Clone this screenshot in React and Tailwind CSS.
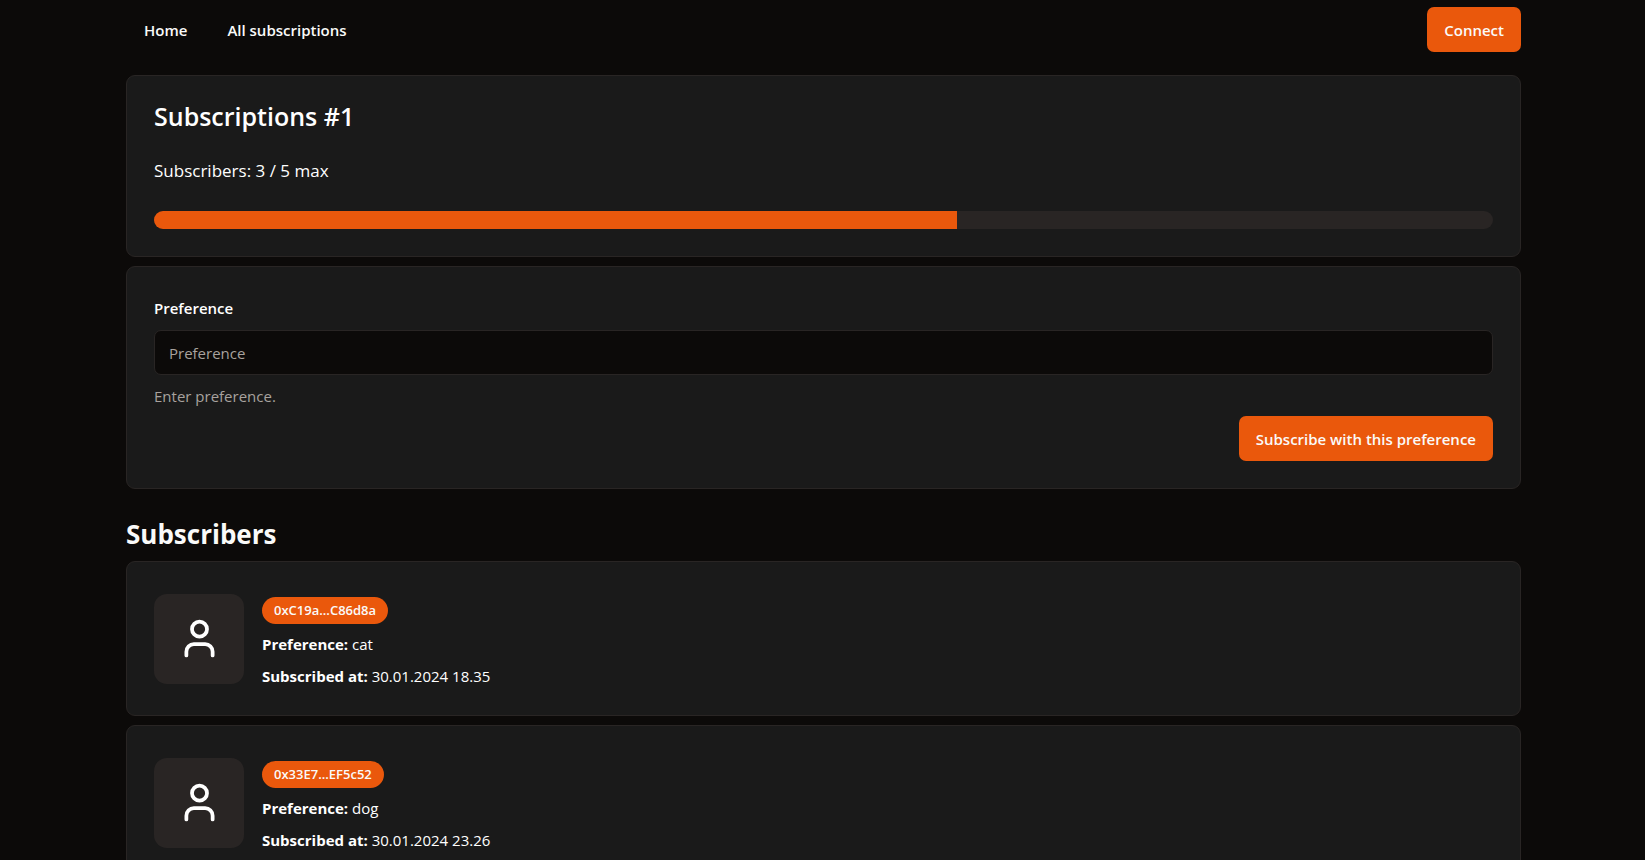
import { User } from "lucide-react";

const subscribers = [
  { address: "0xC19a...C86d8a", preference: "cat", date: "30.01.2024 18.35" },
  { address: "0x33E7...EF5c52", preference: "dog", date: "30.01.2024 23.26" },
];

const current = 3;
const max = 5;

function Card({ as: Tag = "section", className = "", children }) {
  return (
    <Tag className={`rounded-[9px] border border-[#292524] bg-[#1a1a1a] p-[27px] text-white ${className}`}>
      {children}
    </Tag>
  );
}

function Button({ children, type = "button" }) {
  return (
    <button
      type={type}
      className="h-[45px] cursor-pointer whitespace-nowrap rounded-[7px] bg-[#ea580c] px-[17px] pt-px text-[15px] font-semibold text-[#fafaf9] hover:bg-[#d9520b]"
    >
      {children}
    </button>
  );
}

function Subscriber({ address, preference, date }) {
  return (
    <Card as="li" className="flex items-center gap-[18px]">
      <div className="flex size-[90px] shrink-0 items-center justify-center rounded-[13px] bg-[#292524]">
        <User size={45} aria-hidden="true" />
      </div>
      <div className="flex flex-col items-start gap-[9px] pt-2 text-[15px] leading-[23px]">
        <span className="rounded-full bg-[#ea580c] px-3 text-[13px] leading-[27px] font-semibold text-[#fafaf9]">
          {address}
        </span>
        <p>
          <b className="font-bold">Preference:</b> {preference}
        </p>
        <p>
          <b className="font-bold">Subscribed at:</b> {date}
        </p>
      </div>
    </Card>
  );
}

export default function App() {
  return (
    <div className="h-screen overflow-hidden bg-[#0c0a09] pr-[124px] pl-[126px] font-['Open_Sans','Noto_Sans',sans-serif] text-[#fafaf9]">
      <header className="flex items-center justify-between pt-[7px] pb-[23px]">
        <nav className="flex gap-10 pt-px pl-[18px] text-[15px] font-semibold">
          <a href="#home">Home</a>
          <a href="#subscriptions">All subscriptions</a>
        </nav>
        <Button>Connect</Button>
      </header>

      <main>
        <div className="flex flex-col gap-[9px]">
          <Card className="flex flex-col gap-[27px]">
            <h1 className="text-[25px] leading-[27px] font-semibold">Subscriptions #1</h1>
            <p className="text-[17px] leading-[27px]">
              Subscribers: {current} / {max} max
            </p>
            <div
              role="progressbar"
              aria-label="Subscribers"
              aria-valuenow={current}
              aria-valuemax={max}
              className="h-[18px] overflow-hidden rounded-full bg-[#292524]"
            >
              <div className="h-full bg-[#ea580c]" style={{ width: `${(current / max) * 100}%` }} />
            </div>
          </Card>

          <Card>
            <form className="flex flex-col" onSubmit={(e) => e.preventDefault()}>
              <label htmlFor="preference" className="pt-0.5 pb-2.5 text-[15px] leading-6 font-semibold">
                Preference
              </label>
              <input
                id="preference"
                type="text"
                placeholder="Preference"
                aria-describedby="preference-hint"
                className="h-[45px] w-full rounded-[7px] border border-[#292524] bg-[#0c0a09] px-[14px] text-[15px] outline-none placeholder:text-[#a8a29e]"
              />
              <p id="preference-hint" className="pt-[9px] pb-2 text-[15px] leading-6 text-[#a8a29e]">
                Enter preference.
              </p>
              <div className="flex justify-end">
                <Button type="submit">Subscribe with this preference</Button>
              </div>
            </form>
          </Card>
        </div>

        <h2 className="mt-[27px] mb-[9px] text-[26px] leading-9 font-bold">Subscribers</h2>
        <ul className="flex flex-col gap-[9px]">
          {subscribers.map((s) => (
            <Subscriber key={s.address} {...s} />
          ))}
        </ul>
      </main>
    </div>
  );
}
